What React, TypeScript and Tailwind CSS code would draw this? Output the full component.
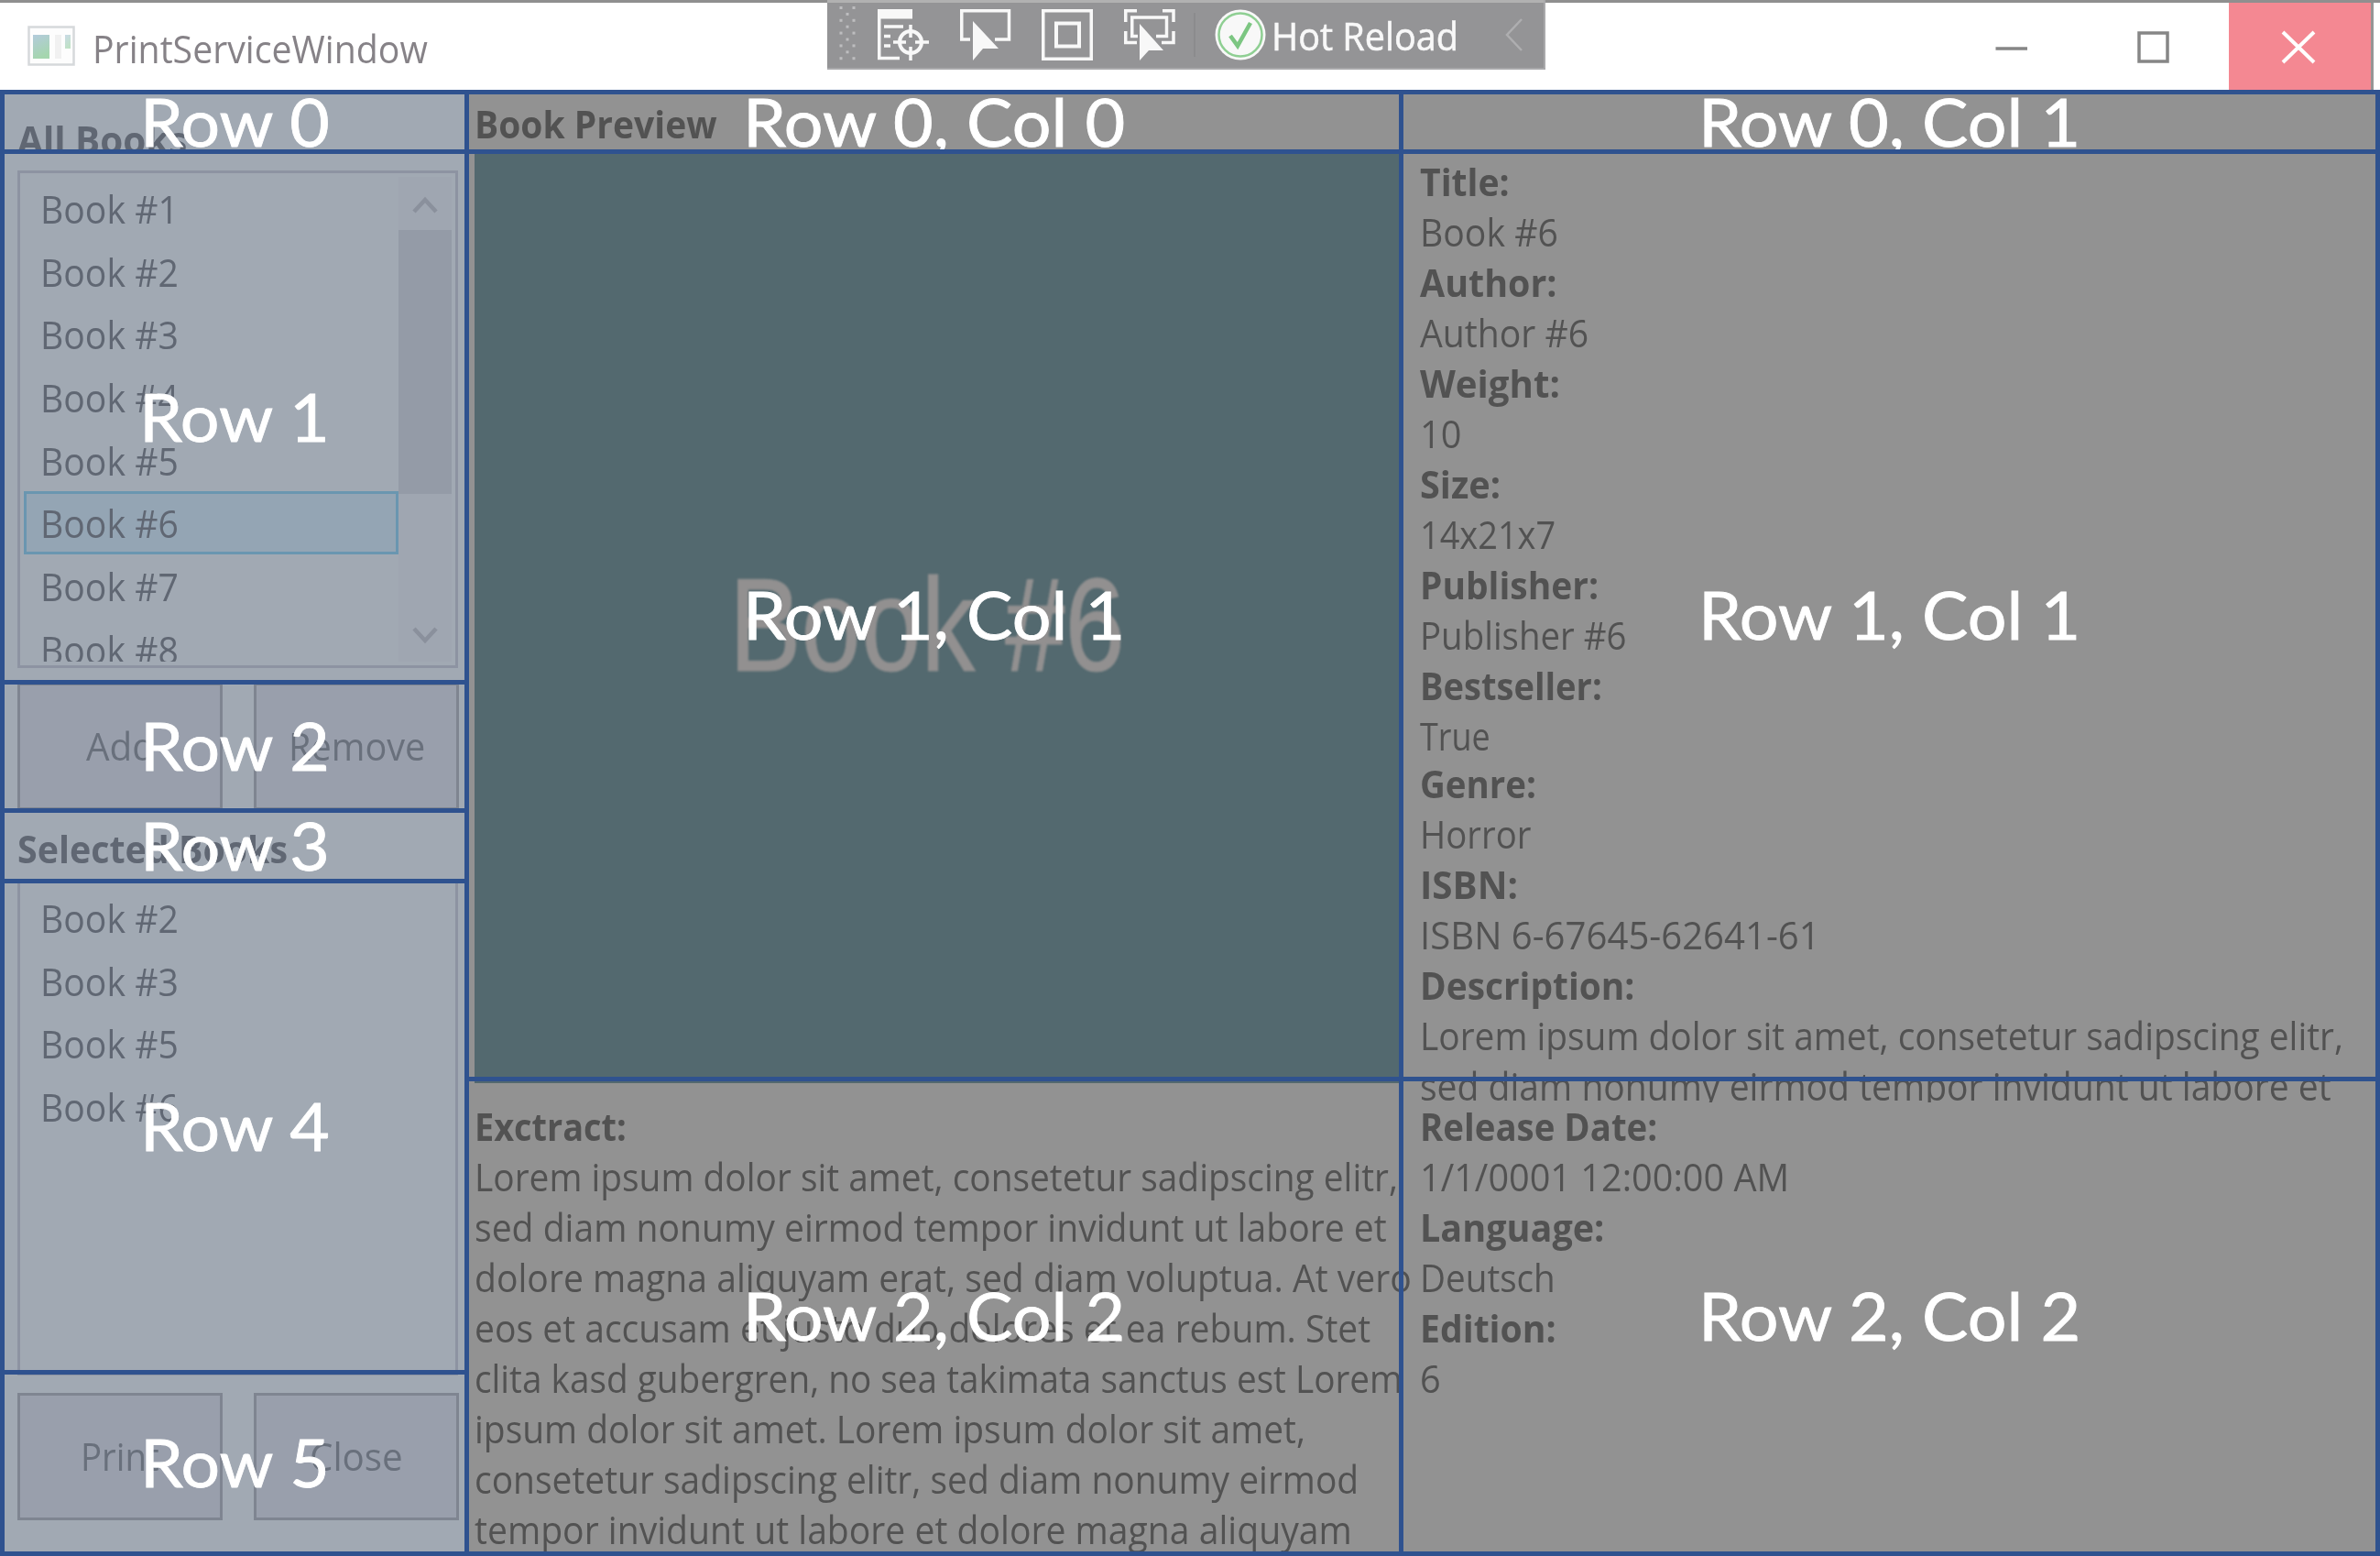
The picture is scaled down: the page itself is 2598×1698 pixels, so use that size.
import React, { useLayoutEffect, useRef, useState } from "react";

/** A single line of text stretched horizontally to a given advance width. */
function Fit({ w, children, className = "" }: { w: number; children: string; className?: string }) {
  const ref = useRef<HTMLSpanElement>(null);
  const [scale, setScale] = useState(1);
  useLayoutEffect(() => {
    if (ref.current) setScale(w / ref.current.offsetWidth);
  }, [w]);
  return (
    <span className={`block whitespace-nowrap ${className}`} style={{ width: w }}>
      <span ref={ref} className="inline-block origin-left" style={{ transform: `scaleX(${scale})` }}>
        {children}
      </span>
    </span>
  );
}

function AppIcon() {
  return (
    <svg className="block h-[44px] w-[52px]" viewBox="0 0 52 44">
      <defs>
        <linearGradient id="pane" x1="0" y1="0" x2="0.3" y2="1">
          <stop offset="0" stopColor="#b3cbdc" />
          <stop offset="1" stopColor="#a5d6ae" />
        </linearGradient>
      </defs>
      <rect x="1.500" y="1.500" width="49" height="41" fill="#fdfdfd" stroke="#d6d9db" strokeWidth="2.500" />
      <rect x="6" y="10" width="18" height="26" fill="url(#pane)" />
      <rect x="30" y="10" width="7" height="26" fill="#f1f1f1" />
      <rect x="41" y="10" width="6" height="15" fill="url(#pane)" opacity="0.700" />
    </svg>
  );
}

function LiveTreeIcon() {
  return (
    <svg className="block h-[56px] w-[56px]" viewBox="0 0 56 56" fill="none" stroke="#f8f8f8" strokeWidth="3.500">
      <path d="M0 0H38V10.500H0Z" fill="#f8f8f8" stroke="none" />
      <path d="M1.750 0V53.500H24M7 19H28M7 29.500H14M7 40H14" />
      <circle cx="36" cy="36" r="12" strokeWidth="4" />
      <path d="M36 17V31M36 41V56M17 36H31M41 36H56" />
    </svg>
  );
}

function SelectIcon() {
  return (
    <svg className="block h-[56px] w-[56px]" viewBox="0 0 56 56" fill="none">
      <path d="M11 33H1.750V1.750H53.500V33H38" stroke="#f8f8f8" strokeWidth="3.500" />
      <path d="M14 13V56L25 43H42Z" fill="#f8f8f8" />
    </svg>
  );
}

function AdornerIcon() {
  return (
    <svg className="block h-[56px] w-[56px]" viewBox="0 0 56 56" fill="none" stroke="#f8f8f8" strokeWidth="3.500">
      <rect x="1.750" y="1.750" width="52.500" height="52.500" />
      <rect x="16" y="15.500" width="25" height="25" strokeWidth="4" />
    </svg>
  );
}

function TrackIcon() {
  return (
    <svg className="block h-[56px] w-[56px]" viewBox="0 0 56 56" fill="none">
      <path d="M1.750 14V1.750H14M42 1.750H54V14M1.750 24V36.500H14M54 24V36.500H41" stroke="#f8f8f8" strokeWidth="3.500" />
      <path d="M15 29.500H8.750V9H46.500V29.500H35" stroke="#f8f8f8" strokeWidth="3.500" />
      <path d="M17 16V56L27 45H43Z" fill="#f8f8f8" />
    </svg>
  );
}

function HotReloadIcon() {
  return (
    <svg className="block h-[56px] w-[56px]" viewBox="0 0 56 56" fill="none">
      <circle cx="28" cy="28" r="27.500" fill="#f8f8f8" />
      <circle cx="28" cy="28" r="23.500" stroke="#8fcf93" strokeWidth="2.500" />
      <path d="M17 29L25 40L39 15" stroke="#7cc682" strokeWidth="4.500" />
    </svg>
  );
}

function Grip() {
  const rows = [0, 1, 2, 3, 4, 5, 6, 7, 8];
  return (
    <svg className="block h-[62px] w-[20px]" viewBox="0 0 20 62" fill="#bdbdbf">
      {rows.map((r) =>
        r % 2 === 1 ? (
          <rect key={r} x="8.500" y={r * 6.9} width="3" height="3" />
        ) : (
          <g key={r}>
            <rect x="1.500" y={r * 6.9} width="3" height="3" />
            <rect x="15.500" y={r * 6.9} width="3" height="3" />
          </g>
        ),
      )}
    </svg>
  );
}

function Toolbar() {
  return (
    <div className="absolute left-[903px] top-0 h-[76px] w-[784px] border-b-2 border-r-2 border-[#a9a9ab] bg-[#949496]">
      <div className="h-[3px] bg-[#b1b1b1]" />
      <div className="flex items-start pl-[12px] pt-[7px]">
        <div className="-mt-[3px]">
          <Grip />
        </div>
        <div className="ml-[23px] flex gap-[33.500px]">
          <LiveTreeIcon />
          <SelectIcon />
          <AdornerIcon />
          <TrackIcon />
        </div>
        <div className="ml-[20px] mt-1 h-[48px] w-[2px] bg-[#8b8b8d]" />
        <div className="ml-[21px]">
          <HotReloadIcon />
        </div>
        <Fit w={204} className="ml-[6px] mt-[2px] text-[41.5px] leading-[55px] text-[#f8f8f8] [-webkit-text-stroke:0.6px_#f8f8f8]">
          Hot Reload
        </Fit>
        <svg className="ml-[51px] mt-[10px] block h-[36px] w-[20px]" viewBox="0 0 20 36" fill="none" stroke="#aeaeb0" strokeWidth="2.500">
          <path d="M18 1L2 18L18 35" />
        </svg>
      </div>
    </div>
  );
}

function TitleBar() {
  return (
    <header className="relative flex h-[100px] shrink-0 bg-white">
      <div className="absolute inset-x-0 top-0 h-[3px] bg-[#8f8f8f]" />
      <div className="flex w-full pt-[3px]">
        <div className="ml-[30px] mt-[25px]">
          <AppIcon />
        </div>
        <Fit w={366} className="ml-[19px] mt-[23px] text-[41.5px] leading-[55px] text-[#868287]">
          PrintServiceWindow
        </Fit>
        <div className="ml-auto flex h-[100px]">
          <svg className="block h-[100px] w-[155px]" viewBox="0 0 155 100">
            <path d="M55.500 50H90" stroke="#868686" strokeWidth="3.500" />
          </svg>
          <svg className="block h-[100px] w-[155px]" viewBox="0 0 155 100" fill="none">
            <rect x="57" y="33" width="31" height="31" stroke="#868686" strokeWidth="3.500" />
          </svg>
          <svg className="block h-[100px] w-[155px] bg-[#f48892]" viewBox="0 0 155 100" fill="none">
            <path d="M59 32L93 65M93 32L59 65" stroke="#fff" strokeWidth="4" />
          </svg>
          <div className="mr-[7px] w-[3px] bg-[#959595]" />
        </div>
      </div>
      <Toolbar />
    </header>
  );
}

function Item({ n, selected = false }: { n: number; selected?: boolean }) {
  return (
    <li
      className={
        selected
          ? "h-[68.7px] border-[3px] border-[#6a96b0] bg-[#94a5b4] pl-[15px] pt-[5px]"
          : "h-[68.7px] border-[3px] border-transparent pl-[15px] pt-[5px]"
      }
    >
      <Fit w={151} className="leading-[55px]">{`Book #${n}`}</Fit>
    </li>
  );
}

function ScrollBar() {
  return (
    <div className="flex w-[58px] flex-col bg-[#9fa6b1]">
      <svg className="block h-[58px] w-full" viewBox="0 0 58 58" fill="none">
        <path d="M17 38L29 25L41 38" stroke="#8a909c" strokeWidth="4.500" />
      </svg>
      <div className="h-[288px] bg-[#949ba7]" />
      <svg className="mt-auto block h-[58px] w-full" viewBox="0 0 58 58" fill="none">
        <path d="M17 22L29 35L41 22" stroke="#8a909c" strokeWidth="4.500" />
      </svg>
    </div>
  );
}

function Button({ label, w }: { label: string; w: number }) {
  return (
    <button className="flex h-[139px] w-[224px] items-center justify-center border-[3px] border-[#7f8591] bg-[#999fac] text-[#69707c]">
      <Fit w={w} className="text-left leading-[55px]">
        {label}
      </Fit>
    </button>
  );
}

function Sidebar() {
  return (
    <aside className="w-[509px] shrink-0 bg-[#a1a9b3] pl-[19px] pt-[25px] text-[#606773]">
      <Fit w={185} className="leading-[55px] font-bold">
        All Books
      </Fit>
      <div className="mt-[6px] flex h-[543px] w-[481px] border-[3px] border-[#8d93a2] py-[4px] pl-[4px] pr-[4px]">
        <ul className="flex-1 overflow-hidden">
          {[1, 2, 3, 4, 5, 6, 7, 8].map((n) => (
            <Item key={n} n={n} selected={n === 6} />
          ))}
        </ul>
        <ScrollBar />
      </div>
      <div className="mt-[16px] flex gap-[34px]">
        <Button label="Add" w={75} />
        <Button label="Remove" w={149} />
      </div>
      <Fit w={295} className="mt-[15px] leading-[55px] font-bold">
        Selected Books
      </Fit>
      <ul className="mt-[6px] h-[541px] w-[481px] border-[3px] border-[#8d93a2] py-[4px] pl-[4px]">
        {[2, 3, 5, 6].map((n) => (
          <Item key={n} n={n} />
        ))}
      </ul>
      <div className="mt-[19px] flex gap-[34px]">
        <Button label="Print" w={86} />
        <Button label="Close" w={102} />
      </div>
    </aside>
  );
}

const EXTRACT: [string, number][] = [
  ["Lorem ipsum dolor sit amet, consetetur sadipscing elitr,", 1008],
  ["sed diam nonumy eirmod tempor invidunt ut labore et", 996],
  ["dolore magna aliquyam erat, sed diam voluptua. At vero", 1023],
  ["eos et accusam et justo duo dolores et ea rebum. Stet", 978],
  ["clita kasd gubergren, no sea takimata sanctus est Lorem", 1013],
  ["ipsum dolor sit amet. Lorem ipsum dolor sit amet,", 907],
  ["consetetur sadipscing elitr, sed diam nonumy eirmod", 965],
  ["tempor invidunt ut labore et dolore magna aliquyam", 958],
];

function Preview() {
  return (
    <section className="w-[1021px] shrink-0 pl-[9px] pt-[8px]">
      <Fit w={265} className="leading-[55px] font-bold">
        Book Preview
      </Fit>
      <div className="mt-[3px] flex h-[1016px] w-full items-center justify-center bg-[#53696f]">
        <Fit w={432} className="-ml-[25px] mt-[16px] text-left font-['Liberation_Sans'] text-[145px] leading-[160px] text-[#929090] blur-[1px] [-webkit-text-stroke:1px_#929090]">
          Book #6
        </Fit>
      </div>
      <Fit w={166} className="mt-[20px] leading-[55px] font-bold">
        Exctract:
      </Fit>
      {EXTRACT.map(([line, w]) => (
        <Fit key={line} w={w} className="leading-[55px]">
          {line}
        </Fit>
      ))}
    </section>
  );
}

type Field = { name: string; nameW: number; value: string; valueW: number };

const TOP_FIELDS: Field[] = [
  { name: "Title:", nameW: 98, value: "Book #6", valueW: 151 },
  { name: "Author:", nameW: 150, value: "Author #6", valueW: 184 },
  { name: "Weight:", nameW: 153, value: "10", valueW: 45 },
  { name: "Size:", nameW: 88, value: "14x21x7", valueW: 148 },
  { name: "Publisher:", nameW: 195, value: "Publisher #6", valueW: 226 },
  { name: "Bestseller:", nameW: 199, value: "True", valueW: 77 },
];

const MORE_FIELDS: Field[] = [
  { name: "Genre:", nameW: 127, value: "Horror", valueW: 121 },
  { name: "ISBN:", nameW: 107, value: "ISBN 6-67645-62641-61", valueW: 437 },
];

const LAST_FIELDS: Field[] = [
  { name: "Release Date:", nameW: 259, value: "1/1/0001 12:00:00 AM", valueW: 403 },
  { name: "Language:", nameW: 201, value: "Deutsch", valueW: 148 },
  { name: "Edition:", nameW: 149, value: "6", valueW: 23 },
];

function Fields({ items }: { items: Field[] }) {
  return (
    <>
      {items.map((f) => (
        <div key={f.name} className="leading-[55px]">
          <Fit w={f.nameW} className="font-bold">
            {f.name}
          </Fit>
          <Fit w={f.valueW}>{f.value}</Fit>
        </div>
      ))}
    </>
  );
}

function Details() {
  return (
    <section className="flex-1 pl-[20px] pt-[71px]">
      <Fields items={TOP_FIELDS} />
      <div className="-mt-[3px]">
        <Fields items={MORE_FIELDS} />
      </div>
      <div className="h-[155px] overflow-hidden leading-[55px]">
        <Fit w={234} className="font-bold">
          Description:
        </Fit>
        <Fit w={1008}>Lorem ipsum dolor sit amet, consetetur sadipscing elitr,</Fit>
        <Fit w={995}>sed diam nonumy eirmod tempor invidunt ut labore et</Fit>
      </div>
      <div className="-mt-px">
        <Fields items={LAST_FIELDS} />
      </div>
    </section>
  );
}

function Cell({ label, w, className }: { label: string; w: number; className: string }) {
  return (
    <div className={`flex items-center justify-center overflow-hidden border-[#2f528f] ${className}`}>
      <Fit w={w} className="-mt-[4px] text-left">
        {label}
      </Fit>
    </div>
  );
}

/** Grid lines and row/column captions laid over the window's content. */
function GridOverlay() {
  return (
    <div className="absolute inset-x-0 bottom-0 top-[98px] flex border-[5px] border-[#2f528f] font-['Lato'] text-[72.5px] leading-[87px] text-white [-webkit-text-stroke:0.8px_white]">
      <div className="grid w-[502px] shrink-0 grid-rows-[65px_579px_140px_77px_536px_193px]">
        <Cell label="Row 0" w={207} className="border-b-[5px]" />
        <Cell label="Row 1" w={208} className="border-b-[5px]" />
        <Cell label="Row 2" w={207} className="border-b-[5px]" />
        <Cell label="Row 3" w={207} className="border-b-[5px]" />
        <Cell label="Row 4" w={207} className="border-b-[5px]" />
        <Cell label="Row 5" w={207} className="" />
      </div>
      <div className="grid flex-1 grid-cols-[1025px_1061px] grid-rows-[65px_1012px_513px]">
        <Cell label="Row 0, Col 0" w={417} className="border-x-[5px] border-b-[5px]" />
        <Cell label="Row 0, Col 1" w={417} className="border-b-[5px]" />
        <Cell label="Row 1, Col 1" w={417} className="border-x-[5px] border-b-[5px]" />
        <Cell label="Row 1, Col 1" w={417} className="border-b-[5px]" />
        <Cell label="Row 2, Col 2" w={417} className="border-x-[5px]" />
        <Cell label="Row 2, Col 2" w={417} className="" />
      </div>
    </div>
  );
}

export default function App() {
  return (
    <div className="relative flex h-[1698px] w-[2598px] flex-col overflow-hidden bg-[#929292] font-['Open_Sans',sans-serif] text-[41.5px] text-[#525252]">
      <TitleBar />
      <main className="flex min-h-0 flex-1">
        <Sidebar />
        <Preview />
        <Details />
      </main>
      <GridOverlay />
    </div>
  );
}
